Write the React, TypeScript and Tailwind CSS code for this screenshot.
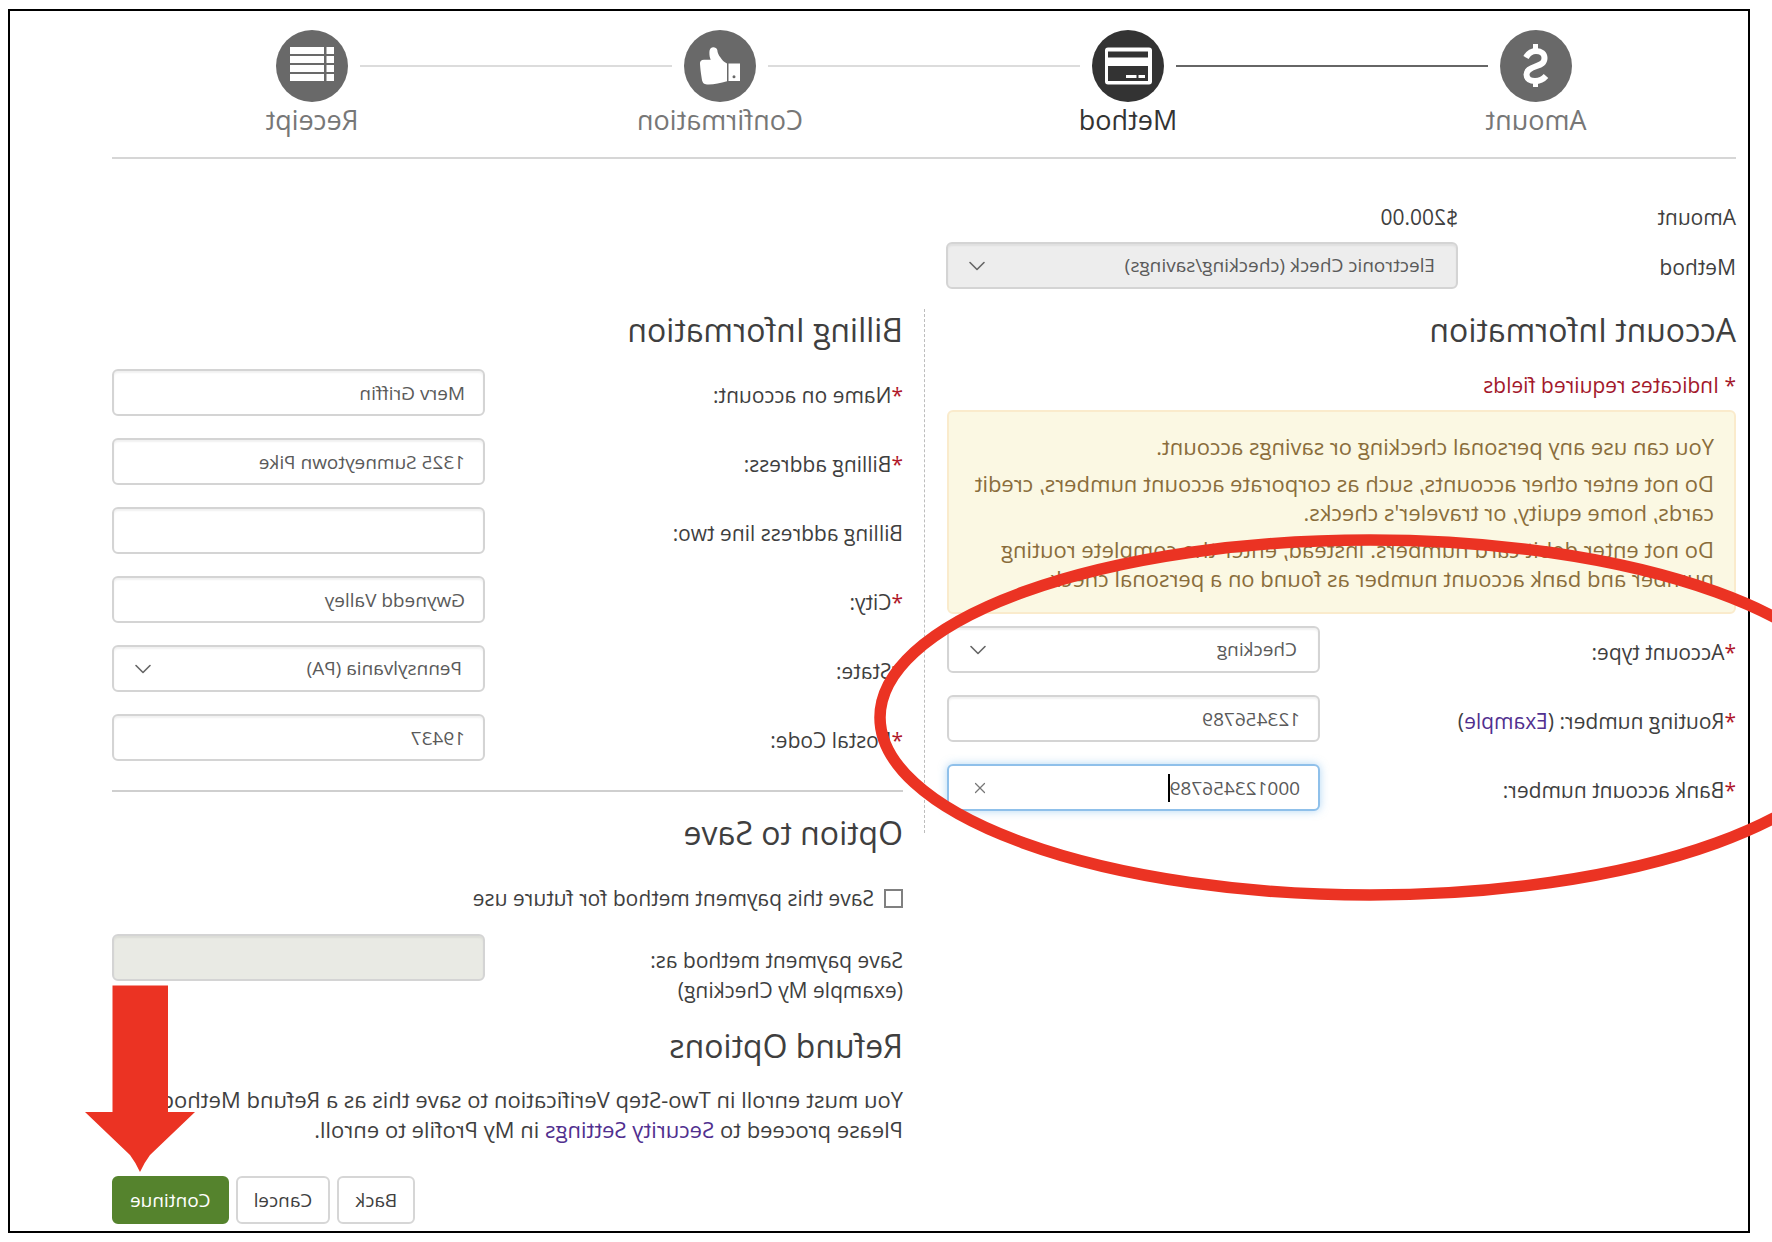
import React, { useState } from "react";
import { ChevronDown, X } from "lucide-react";

const fieldStyle =
  "w-full h-[47px] rounded-md border-2 border-[#d4d4d4] bg-white px-[18px] text-[19px] text-[#5a5a5a] outline-none shadow-[inset_0_2px_2px_rgba(0,0,0,0.06)]";

const selectStyle =
  "w-full h-[47px] rounded-md border-2 border-[#d4d4d4] bg-white px-[21px] text-[19px] text-[#5a5a5a] outline-none appearance-none opacity-100 disabled:bg-[#ededed] shadow-[inset_0_2px_2px_rgba(0,0,0,0.06)]";

const steps = [
  { name: "Amount", icon: <DollarIcon />, circle: "bg-[#696969]", text: "text-[#777777]", line: "bg-[#666666]" },
  { name: "Method", icon: <CardIcon />, circle: "bg-[#333333]", text: "text-[#333333]", line: "bg-[#dcdcdc]" },
  { name: "Confirmation", icon: <ThumbIcon />, circle: "bg-[#696969]", text: "text-[#777777]", line: "bg-[#dcdcdc]" },
  { name: "Receipt", icon: <ListIcon />, circle: "bg-[#696969]", text: "text-[#777777]", line: "" },
];

function DollarIcon() {
  return (
    <svg viewBox="0 0 72 72" className="w-full" fill="none" stroke="white">
      <path d="M36.5 14v8M36.5 49v8" strokeWidth="5" />
      <path
        d="M46 27.5C43.500 23 40 21 36 21C30.500 21 27.500 24 27.500 28C27.500 33 31 34.500 36 36.300C42 38.500 45.500 40.500 45.500 44.500C45.500 49 41.500 51 37 51C32 51 29 49.500 26 46"
        strokeWidth="6"
      />
    </svg>
  );
}

function CardIcon() {
  return (
    <svg viewBox="0 0 72 72" className="w-full">
      <path
        fill="white"
        fillRule="evenodd"
        d="M15 17.500h41a3 3 0 0 1 3 3v31a3 3 0 0 1-3 3H15a3 3 0 0 1-3-3v-31a3 3 0 0 1 3-3zM16 21.500v6h40v-6zM16 36v15h40V36z"
      />
      <path fill="white" d="M19 45h6.500v3H19zM27.500 45H38v3H27.500z" />
    </svg>
  );
}

function ThumbIcon() {
  return (
    <svg viewBox="0 0 72 72" className="w-full" fill="white">
      <path fillRule="evenodd" d="M16 33.500h11.500V51H16zM22 45.200a1.500 1.500 0 1 0 0 3a1.500 1.500 0 1 0 0-3z" />
      <path d="M29 33.500C32 32 34 30 35.500 27.500C37.500 25 38.500 22.500 38.700 20C39.200 18 41 17.200 43 17.300C45.500 17.500 46.500 19.500 46.600 22C46.700 25 46.300 27.500 45.300 29.800H52C55 29.800 56.300 31.500 56 34C55.800 38 55 44 54.200 49C53.500 53 52 54.300 49 54.500C43 54.800 36 53.500 29 51.300z" />
    </svg>
  );
}

function ListIcon() {
  return (
    <svg viewBox="0 0 72 72" className="w-full" fill="white">
      <path d="M14 17h7.500v7H14zM24 17H58v7H24zM14 26h7.500v7H14zM24 26H58v7H24zM14 35h7.500v7H14zM24 35H58v7H24zM14 44h7.500v7H14zM24 44H58v7H24z" />
    </svg>
  );
}

function Row({ id, label, required, extra, children }: {
  id: string;
  label: string;
  required?: boolean;
  extra?: React.ReactNode;
  children: React.ReactNode;
}) {
  return (
    <div className="grid grid-cols-[1fr_373px]">
      <div className="pt-[11px] text-[21px] leading-[30px]">
        <label htmlFor={id}>
          {required && <span className="text-[#b0182b]">*</span>}
          {label}
        </label>
        {extra}
      </div>
      <div className="relative">{children}</div>
    </div>
  );
}

function Select({ id, value, disabled }: { id: string; value: string; disabled?: boolean }) {
  return (
    <div className="relative">
      <select id={id} disabled={disabled} className={selectStyle}>
        <option>{value}</option>
      </select>
      <ChevronDown
        className="absolute right-[17px] top-[10px] size-7 text-[#666666] pointer-events-none"
        strokeWidth={1.4}
      />
    </div>
  );
}

function App() {
  const [name, setName] = useState<string>("Merv Griffin");
  const [address, setAddress] = useState<string>("1325 Sumneytown Pike");
  const [addressTwo, setAddressTwo] = useState<string>("");
  const [city, setCity] = useState<string>("Gwynedd Valley");
  const [postal, setPostal] = useState<string>("19437");
  const [routing, setRouting] = useState<string>("123456789");
  const [account, setAccount] = useState<string>("000123456789");
  const [save, setSave] = useState<boolean>(false);

  return (
    // the whole page is flipped left to right
    <div className="relative overflow-hidden min-h-screen bg-white pt-[9px] pl-[22px] pr-2 pb-[9px] -scale-x-100 font-['Open_Sans','Noto_Sans',sans-serif] text-[#3f3f3f]">
      <div className="border-2 border-black pt-[19px] pl-3 pr-[102px] pb-[7px]">
        {/* steps */}
        <div className="flex items-start pl-[164px] pr-[164px] pb-[19px] border-b-2 border-[#d6d6d6]">
          {steps.map((step) => (
            <React.Fragment key={step.name}>
              <div className="w-[72px] shrink-0 flex flex-col items-center">
                <div className={`size-[72px] rounded-full ${step.circle}`}>{step.icon}</div>
                <span className={`text-[27px] leading-9 whitespace-nowrap ${step.text}`}>{step.name}</span>
              </div>
              {step.line && <div className={`flex-1 h-0.5 mt-[35px] mx-3 ${step.line}`} />}
            </React.Fragment>
          ))}
        </div>

        {/* amount + method */}
        <div className="w-1/2 pr-[22px] pt-[43px]">
          <div className="grid grid-cols-[278px_1fr] text-[21px] leading-[30px]">
            <span>Amount</span>
            <span>$200.00</span>
          </div>
          <div className="grid grid-cols-[278px_1fr] mt-[10px]">
            <label htmlFor="method" className="pt-[10px] text-[21px] leading-[30px]">
              Method
            </label>
            <Select id="method" value="Electronic Check (checking/savings)" disabled />
          </div>
        </div>

        <div className="grid grid-cols-2 items-start mt-5">
          {/* account information */}
          <section className="pr-[22px] pb-[22px] border-r border-dashed border-[#bdbdbd]">
            <h2 className="text-[32px] leading-[42px]">Account Information</h2>
            <p className="mt-[19px] text-[21px] leading-[30px] text-[#a3182b]">* Indicates required fields</p>
            <div className="mt-[10px] mb-3 px-5 pt-5 pb-[19px] rounded-md border-2 border-[#faebcc] bg-[#fbf8e3] text-[22px] leading-[29px] text-[#8a6d3b]">
              <p>You can use any personal checking or savings account.</p>
              <p className="mt-2">
                Do not enter other accounts, such as corporate account numbers, credit cards, home equity, or
                traveler's checks.
              </p>
              <p className="mt-2">
                Do not enter debit card numbers. Instead, enter the complete routing number and bank account
                number as found on a personal check.
              </p>
            </div>
            <div className="flex flex-col gap-[22px]">
              <Row id="type" label="Account type:" required>
                <Select id="type" value="Checking" />
              </Row>
              <Row
                id="routing"
                label="Routing number:"
                required
                extra={<> (<a href="#" className="text-[#51308f]">Example</a>)</>}
              >
                <input
                  id="routing"
                  type="text"
                  className={fieldStyle}
                  value={routing}
                  onChange={(e) => setRouting(e.target.value)}
                />
              </Row>
              <Row id="account" label="Bank account number:" required>
                <input
                  id="account"
                  type="text"
                  className="w-full h-[47px] rounded-md border-2 border-[#8fc0ea] bg-white px-[18px] text-[19px] text-[#5a5a5a] outline-none shadow-[0_0_8px_rgba(102,175,233,0.5)]"
                  value={account}
                  onChange={(e) => setAccount(e.target.value)}
                />
                <span className="absolute left-[150px] top-[10px] w-0.5 h-[28px] bg-black" />
                <button
                  type="button"
                  aria-label="Clear"
                  className="absolute right-6 top-[15px]"
                  onClick={() => setAccount("")}
                >
                  <X className="size-[18px] text-[#777777]" strokeWidth={1.6} />
                </button>
              </Row>
            </div>
          </section>

          {/* billing information */}
          <section className="pl-[21px]">
            <h2 className="text-[32px] leading-[42px]">Billing Information</h2>
            <div className="flex flex-col gap-[22px] mt-[18px] pb-[29px] border-b-2 border-[#cfcfcf]">
              <Row id="name" label="Name on account:" required>
                <input id="name" type="text" className={fieldStyle} value={name} onChange={(e) => setName(e.target.value)} />
              </Row>
              <Row id="address" label="Billing address:" required>
                <input id="address" type="text" className={fieldStyle} value={address} onChange={(e) => setAddress(e.target.value)} />
              </Row>
              <Row id="address2" label="Billing address line two:">
                <input id="address2" type="text" className={fieldStyle} value={addressTwo} onChange={(e) => setAddressTwo(e.target.value)} />
              </Row>
              <Row id="city" label="City:" required>
                <input id="city" type="text" className={fieldStyle} value={city} onChange={(e) => setCity(e.target.value)} />
              </Row>
              <Row id="state" label="State:" required>
                <Select id="state" value="Pennsylvania (PA)" />
              </Row>
              <Row id="postal" label="Postal Code:" required>
                <input id="postal" type="text" className={fieldStyle} value={postal} onChange={(e) => setPostal(e.target.value)} />
              </Row>
            </div>

            <h2 className="mt-5 text-[32px] leading-[42px]">Option to Save</h2>
            <label className="flex items-center gap-2.5 mt-[29px] text-[21px] leading-[30px]">
              <input
                type="checkbox"
                className="appearance-none size-[19px] border-2 border-[#808080] bg-white checked:bg-[#808080]"
                checked={save}
                onChange={(e) => setSave(e.target.checked)}
              />
              Save this payment method for future use
            </label>
            <div className="grid grid-cols-[1fr_373px] mt-[21px]">
              <label htmlFor="saveAs" className="pt-[11px] text-[21px] leading-[30px]">
                Save payment method as:
                <br />
                (example My Checking)
              </label>
              <input
                id="saveAs"
                type="text"
                disabled={!save}
                className={`${fieldStyle} disabled:bg-[#e9eae4]`}
              />
            </div>

            <h2 className="mt-5 text-[32px] leading-[42px]">Refund Options</h2>
            <p className="mt-[17px] text-[22px] leading-[30px]">
              You must enroll in Two-Step Verification to save this as a Refund Method.
              <br />
              Please proceed to <a href="#" className="text-[#51308f]">Security Settings</a> in My Profile to enroll.
            </p>

            <div className="flex justify-end gap-[7px] mt-8 text-[19px]">
              <button type="button" className="h-12 px-4 rounded-md border-2 border-[#d6d6d6] bg-white">
                Back
              </button>
              <button type="button" className="h-12 px-4 rounded-md border-2 border-[#d6d6d6] bg-white">
                Cancel
              </button>
              <button
                type="button"
                className="h-12 px-4 rounded-md border-2 border-[#55832d] bg-[#55832d] text-white"
              >
                Continue
              </button>
            </div>
          </section>
        </div>
      </div>

      {/* red marks over the form */}
      <svg
        className="absolute left-[-94px] top-[534px] w-[992px] h-[367px] pointer-events-none"
        viewBox="0 0 992 367"
        fill="none"
      >
        <ellipse cx="496" cy="183.5" rx="490" ry="177.5" stroke="#eb3323" strokeWidth="11.500" />
      </svg>
      <svg
        className="absolute right-[85px] top-[985px] w-[110px] h-[187px] pointer-events-none"
        viewBox="0 0 110 187"
        fill="#eb3323"
      >
        <path d="M27 0.500H82.500V127H110L65 170Q59 178 55 187Q51 178 45 170L0 127H27z" />
      </svg>
    </div>
  );
}

export default App;
